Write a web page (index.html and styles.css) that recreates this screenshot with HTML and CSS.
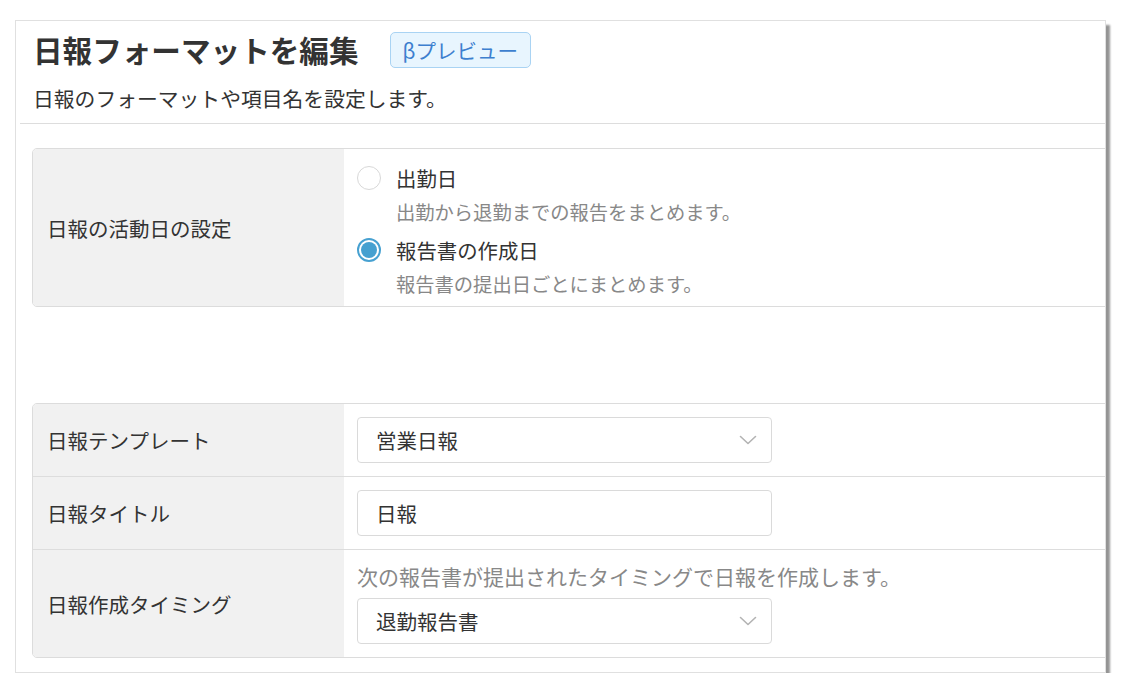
FILE: index.html
```html
<!DOCTYPE html>
<html lang="ja">
<head>
<meta charset="utf-8">
<title>日報フォーマットを編集</title>
<link rel="stylesheet" href="styles.css">
</head>
<body>
<div class="frame">
  <header class="header">
    <div class="title-row">
      <h1 class="title">日報フォーマットを編集</h1>
      <span class="badge">βプレビュー</span>
    </div>
    <p class="subtitle">日報のフォーマットや項目名を設定します。</p>
  </header>
  <div class="content">
    <div class="table table-first">
      <div class="row">
        <div class="label">日報の活動日の設定</div>
        <div class="value value-radios">
          <div class="option">
            <div class="option-line"><span class="radio"></span><span class="option-label">出勤日</span></div>
            <div class="option-desc">出勤から退勤までの報告をまとめます。</div>
          </div>
          <div class="option">
            <div class="option-line"><span class="radio radio-checked"><span class="radio-dot"></span></span><span class="option-label">報告書の作成日</span></div>
            <div class="option-desc">報告書の提出日ごとにまとめます。</div>
          </div>
        </div>
      </div>
    </div>

    <div class="table table-second">
      <div class="row">
        <div class="label">日報テンプレート</div>
        <div class="value">
          <div class="select"><span class="select-text">営業日報</span>
            <svg class="chevron" width="18" height="10" viewBox="0 0 18 10"><polyline points="1.5,1.5 9,8.5 16.5,1.5" fill="none" stroke="#b3b3b3" stroke-width="1.6" stroke-linecap="round" stroke-linejoin="round"/></svg>
          </div>
        </div>
      </div>
      <div class="row">
        <div class="label">日報タイトル</div>
        <div class="value">
          <div class="input">日報</div>
        </div>
      </div>
      <div class="row">
        <div class="label">日報作成タイミング</div>
        <div class="value">
          <div class="hint">次の報告書が提出されたタイミングで日報を作成します。</div>
          <div class="select"><span class="select-text">退勤報告書</span>
            <svg class="chevron" width="18" height="10" viewBox="0 0 18 10"><polyline points="1.5,1.5 9,8.5 16.5,1.5" fill="none" stroke="#b3b3b3" stroke-width="1.6" stroke-linecap="round" stroke-linejoin="round"/></svg>
          </div>
        </div>
      </div>
    </div>
  </div>
</div>
</body>
</html>
```
FILE: styles.css
```css
* { box-sizing: border-box; }
html, body { margin: 0; padding: 0; background: #ffffff; }
body {
  font-family: "Noto Sans CJK JP", "Noto Sans", sans-serif;
  color: #333333;
}
.frame {
  margin: 20px 0 0 15px;
  width: 1091px;
  height: 653px;
  border: 1px solid #e0e0e0;
  background: #ffffff;
  box-shadow: 4px 5px 2px rgba(0, 0, 0, 0.42);
  overflow: hidden;
}
.header {
  margin-left: 4px;
  padding: 9px 0 11px 13px;
  border-bottom: 1px solid #dddddd;
}
.title-row {
  display: flex;
  align-items: center;
  height: 40px;
  gap: 31px;
}
.title {
  margin: 0;
  font-size: 29.6px;
  line-height: 40px;
  font-weight: 700;
  color: #333333;
}
.badge {
  display: inline-flex;
  align-items: center;
  height: 36px;
  padding: 0 12px;
  border: 1px solid #a9d3f3;
  border-radius: 5px;
  background: #e8f5fe;
  color: #3d7fcf;
  font-size: 20.5px;
}
.subtitle {
  margin: 14px 0 0 0;
  font-size: 20.8px;
  line-height: 28px;
  color: #333333;
}
.content {
  padding: 24px 0 0 16px;
}
.table {
  width: 1110px;
  border: 1px solid #dcdcdc;
  border-radius: 5px;
  overflow: hidden;
}
.table-second {
  margin-top: 96px;
}
.row {
  display: grid;
  grid-template-columns: 311px 1fr;
  border-top: 1px solid #dddddd;
}
.row:first-child { border-top: none; }
.label {
  display: flex;
  align-items: center;
  padding-left: 14px;
  background: #f1f1f1;
  font-size: 20.5px;
  color: #333333;
}
.value {
  padding: 13px 13px 13px 13px;
  background: #ffffff;
}
.value-radios {
  padding: 14px 13px 8px 13px;
}
.option + .option { margin-top: 9px; }
.option-line {
  display: flex;
  align-items: center;
  height: 30px;
  gap: 15px;
}
.option-label {
  font-size: 20.4px;
  line-height: 30px;
  color: #333333;
}
.option-desc {
  margin-top: 5px;
  padding-left: 39px;
  font-size: 19.3px;
  line-height: 28px;
  color: #888888;
}
.radio {
  flex: none;
  width: 24px;
  height: 24px;
  border-radius: 50%;
  border: 1.5px solid #d8d8d8;
  background: #ffffff;
  display: flex;
  align-items: center;
  justify-content: center;
}
.radio-checked {
  border: 2px solid #47a1d1;
}
.radio-dot {
  width: 16px;
  height: 16px;
  border-radius: 50%;
  background: #45a0d0;
}
.select, .input {
  display: flex;
  align-items: center;
  width: 415px;
  height: 46px;
  padding: 0 18px;
  border: 1px solid #dadada;
  border-radius: 4px;
  background: #ffffff;
  font-size: 20.5px;
  color: #333333;
}
.select {
  justify-content: space-between;
  padding-right: 14px;
}
.hint {
  font-size: 21px;
  line-height: 26px;
  color: #888888;
  margin-bottom: 9px;
}
```
